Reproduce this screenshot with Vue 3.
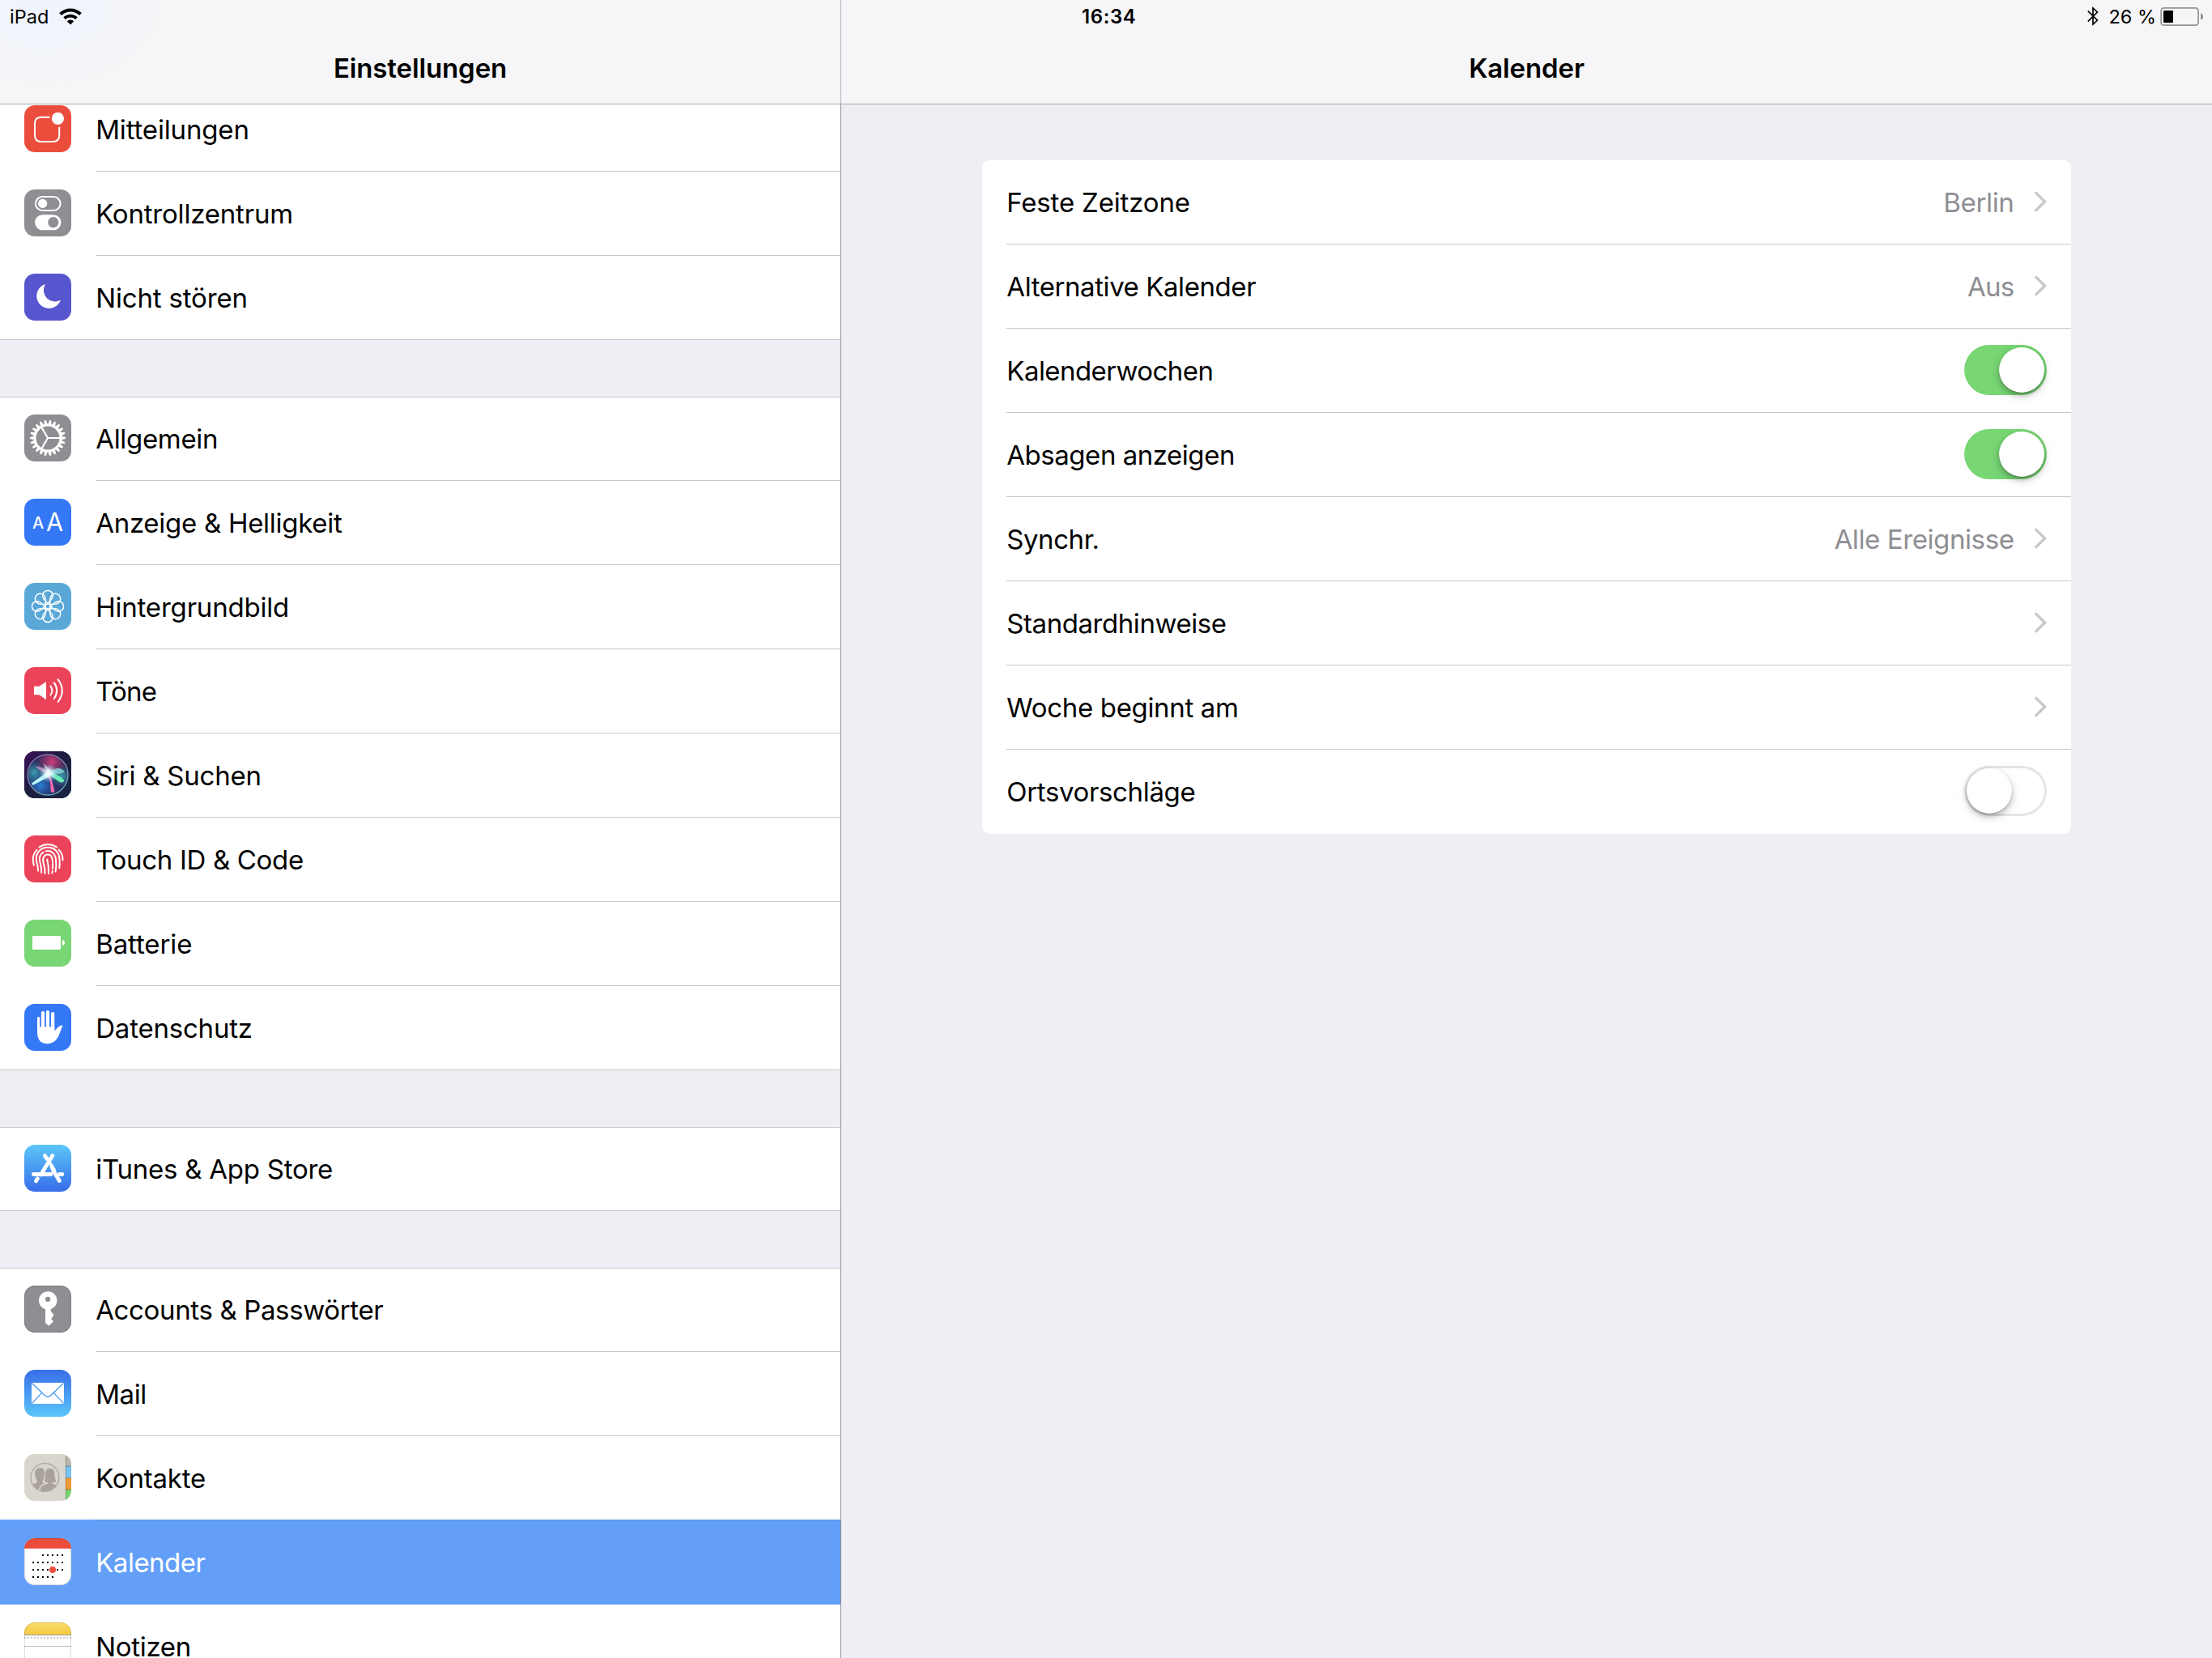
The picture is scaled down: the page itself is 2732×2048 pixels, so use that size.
<script setup>
const groups = [
  [
    { id: 'notify', label: 'Mitteilungen', bg: '#eb4d3d', track: -0.16 },
    { id: 'control', label: 'Kontrollzentrum', bg: '#8e8e93', track: -0.2 },
    { id: 'moon', label: 'Nicht stören', bg: '#5756ce', track: -0.16 },
  ],
  [
    { id: 'gear', label: 'Allgemein', bg: '#8e8e93', track: -0.32 },
    { id: 'display', label: 'Anzeige & Helligkeit', bg: '#3478f6', track: -0.28 },
    { id: 'wallpaper', label: 'Hintergrundbild', bg: '#59a8d8', track: -0.2 },
    { id: 'sound', label: 'Töne', bg: '#eb445a', track: -0.8 },
    { id: 'siri', label: 'Siri & Suchen', bg: '#1b1c3c', track: -0.25 },
    { id: 'touch', label: 'Touch ID & Code', bg: '#eb445a', track: -0.32 },
    { id: 'battery', label: 'Batterie', bg: '#78d674', track: -0.1 },
    { id: 'privacy', label: 'Datenschutz', bg: '#3478f6', track: -0.2 },
  ],
  [{ id: 'store', label: 'iTunes & App Store', bg: 'linear-gradient(#5bc6f9, #386de9)', track: -0.25 }],
  [
    { id: 'key', label: 'Accounts & Passwörter', bg: '#8e8e93', track: -0.36 },
    { id: 'mail', label: 'Mail', bg: 'linear-gradient(#386de9, #5bc6f9)', track: -0.4 },
    { id: 'contacts', label: 'Kontakte', bg: '#d9d6ce', track: -0.2 },
    { id: 'calendar', label: 'Kalender', bg: '#ffffff', selected: true, track: -0.5 },
    { id: 'notes', label: 'Notizen', bg: '#ffffff', track: -0.3 },
  ],
]

const settings = [
  { label: 'Feste Zeitzone', track: -0.17, value: 'Berlin', valueTrack: -0.35 },
  { label: 'Alternative Kalender', track: -0.43, value: 'Aus', valueTrack: -0.7 },
  { label: 'Kalenderwochen', track: -0.56, toggle: true, on: true },
  { label: 'Absagen anzeigen', track: -0.47, toggle: true, on: true },
  { label: 'Synchr.', track: -0.45, value: 'Alle Ereignisse', valueTrack: -0.4 },
  { label: 'Standardhinweise', track: -0.44 },
  { label: 'Woche beginnt am', track: -0.34 },
  { label: 'Ortsvorschläge', track: -0.35, toggle: true, on: false },
]

const gearTeeth = Array.from({ length: 22 }, (_, i) => (i * 360) / 22)
const petals = Array.from({ length: 8 }, (_, i) => i * 45)

const calendarDots = [
  ...[23, 29, 35, 41, 47].map((x) => [x, 21]),
  ...[11, 17, 23, 29, 35, 41, 47].map((x) => [x, 30]),
  ...[11, 17, 23, 29, 41, 47].map((x) => [x, 39]),
  ...[11, 17, 23, 29, 35].map((x) => [x, 48]),
]
const notesHoles = Array.from({ length: 15 }, (_, i) => i * 4)
</script>

<template>
  <div class="screen">
    <aside class="sidebar">
      <header class="head head-left">
        <div class="status">
          <span class="carrier">iPad</span>
          <svg class="wifi" width="28" height="21" viewBox="0 0 28 21">
            <path d="M1.6 7.6 A17.6 17.6 0 0 1 26.4 7.6" fill="none" stroke="#000" stroke-width="4.2" />
            <path d="M6.6 12.6 A10.6 10.6 0 0 1 21.4 12.6" fill="none" stroke="#000" stroke-width="3.8" />
            <path d="M14 20.4 L9.8 16.2 A6 6 0 0 1 18.2 16.2 Z" />
          </svg>
        </div>
        <h1 class="title">Einstellungen</h1>
      </header>

      <nav class="list">
        <section v-for="(group, g) in groups" :key="g" class="group">
          <div v-for="item in group" :key="item.id" class="row" :class="{ selected: item.selected }">
            <svg class="icon" :style="{ background: item.bg }" viewBox="0 0 58 58">
              <g v-if="item.id === 'notify'">
                <path d="M31.5 14.8 H21 Q13 14.8 13 22.8 V37 Q13 45 21 45 H35.2 Q43.2 45 43.2 37 V26.7" fill="none" stroke="#fff" stroke-width="2" />
                <circle cx="41.4" cy="16.4" r="7.6" fill="#fff" />
              </g>

              <g v-else-if="item.id === 'control'">
                <rect x="14" y="9" width="30.5" height="17" rx="8.5" fill="none" stroke="#fff" stroke-width="2" />
                <circle cx="22.6" cy="17.4" r="5.6" fill="#fff" />
                <rect x="13" y="31.2" width="32.5" height="19" rx="9.5" fill="#fff" />
                <circle cx="35.8" cy="40.7" r="6.6" fill="#8e8e93" />
              </g>

              <path v-else-if="item.id === 'moon'" d="M26 13 A15.3 15.3 0 1 0 45 32.5 A14 14 0 0 1 26 13 Z" fill="#fff" />

              <g v-else-if="item.id === 'gear'" transform="translate(29 29)" stroke="#fff" fill="none">
                <circle r="15.9" stroke-width="2.8" />
                <path
                  v-for="a in gearTeeth" :key="a" :transform="`rotate(${a})`"
                  d="M16.5 -2.2 L22 -1 V1 L16.5 2.2 Z" fill="#fff" stroke="none"
                />
                <path d="M0 0 H15 M0 0 L-7.5 -13 M0 0 L-7.5 13" stroke-width="2.2" />
              </g>

              <g v-else-if="item.id === 'display'" fill="#fff" font-family="Inter, sans-serif" text-anchor="middle">
                <text x="17.2" y="37.2" font-size="20" font-weight="500">A</text>
                <text x="37.6" y="40" font-size="30.5">A</text>
              </g>

              <g v-else-if="item.id === 'wallpaper'" transform="translate(29 29)" stroke="#fff" stroke-width="1.5" fill="none">
                <path
                  v-for="a in petals" :key="a" :transform="`rotate(${a})`"
                  d="M0 -3.6 L-5 -9.4 A6.3 6.3 0 1 1 5 -9.4 Z"
                />
                <circle r="3" />
              </g>

              <g v-else-if="item.id === 'sound'" fill="none" stroke="#fff" stroke-width="2">
                <path d="M12 23.8 H18.6 L27 18 V40.2 L18.6 34.2 H12 Z" fill="#fff" stroke="none" />
                <path d="M32 22.8 Q36.8 29 32 35.2 M36.4 18.6 Q44 29 36.4 39.6 M41.2 14.6 Q52.4 29 41.2 43.6" />
              </g>

              <g v-else-if="item.id === 'siri'">
                <defs>
                  <linearGradient id="siriBg" x1="0" y1="0" x2="1" y2="1">
                    <stop offset="0" stop-color="#3d0f5c" />
                    <stop offset="0.45" stop-color="#1c1d3c" />
                    <stop offset="1" stop-color="#182747" />
                  </linearGradient>
                  <linearGradient id="siriRing" x1="0" y1="0" x2="0.6" y2="1">
                    <stop offset="0" stop-color="#8a6aa4" />
                    <stop offset="1" stop-color="#6fa8bd" />
                  </linearGradient>
                  <radialGradient id="siriRed"><stop offset="0" stop-color="#d0407c" /><stop offset="1" stop-color="#b0285c" stop-opacity="0" /></radialGradient>
                  <radialGradient id="siriBlue"><stop offset="0" stop-color="#2b7fd6" /><stop offset="1" stop-color="#2458b0" stop-opacity="0" /></radialGradient>
                  <radialGradient id="siriTeal"><stop offset="0" stop-color="#3f9cb4" /><stop offset="1" stop-color="#2c8c90" stop-opacity="0" /></radialGradient>
                  <radialGradient id="siriCore"><stop offset="0" stop-color="#fff" /><stop offset="0.35" stop-color="#e2f8ff" stop-opacity="0.85" /><stop offset="1" stop-color="#9adcf0" stop-opacity="0" /></radialGradient>
                  <filter id="siriSoft" x="-30%" y="-30%" width="160%" height="160%"><feGaussianBlur stdDeviation="0.5" /></filter>
                  <clipPath id="siriClip"><circle cx="29" cy="29" r="24.5" /></clipPath>
                </defs>
                <rect width="58" height="58" fill="url(#siriBg)" />
                <g clip-path="url(#siriClip)">
                  <circle cx="29" cy="29" r="24.5" fill="#2a2f62" />
                  <circle cx="34" cy="13" r="19" fill="url(#siriRed)" />
                  <circle cx="20" cy="42" r="20" fill="url(#siriBlue)" />
                  <circle cx="12" cy="26" r="14" fill="url(#siriTeal)" />
                  <circle cx="46" cy="31" r="13" fill="url(#siriTeal)" />
                  <g filter="url(#siriSoft)">
                    <path d="M30 27 C26 22 20 18 14 19 C18 23 24 27 30 27 Z" fill="#e0a0d0" opacity="0.7" />
                    <path d="M30 28 C38 18 46 20 50 25.5 C44 28.5 36 29 30 28 Z" fill="#8ad8dc" opacity="0.8" />
                    <path d="M30 25 C40 28 47 32 49.5 36.5 Q47 40 43 37.4 C38 34 33 32 30 25 Z" fill="#6ce8b4" />
                    <path d="M28 25 C34 33 36 42 37.4 50 Q34.4 52.5 32.6 49 C33 40 31 33 28 25 Z" fill="#f468b2" />
                    <path d="M32 23 L31.4 31 L10.4 42 L9.2 39.6 Z" fill="#bdf8f8" />
                    <path d="M29 28 L23 14 L33.4 25 Z" fill="#f6c0e0" opacity="0.7" />
                  </g>
                  <circle cx="30" cy="27" r="11.5" fill="url(#siriCore)" />
                </g>
                <circle cx="29" cy="29" r="25" fill="none" stroke="url(#siriRing)" stroke-width="1.3" />
              </g>

              <path
                v-else-if="item.id === 'touch'"
                d="M18.5 14.4 Q29 7.8 40 14.4 M15.6 17.6 Q8.5 24.5 11.8 36.8 M42.6 17.6 Q48 23 47.4 30.4 M17 43.6 Q17.2 38.6 15.4 33.4 C12.6 22.5 19.5 14.8 29 14.8 C37.5 14.8 43 20.5 43.4 29 Q44.2 35 43.3 40.4 M21.2 46 Q21.4 39 19.4 33 C17.8 26.5 19.5 23 23.4 20.8 M26.4 19.4 C33 17.8 38 22 39 29 Q40 37 38.6 44.6 M25.6 47 Q25.6 39.5 23.5 33 C22.2 27 25 23.6 29 23.6 C32.6 23.6 34.6 26.6 35 31.4 Q35.6 36.4 35 41 M34.8 44 L34.4 46.4 M30 47.2 Q30.4 38 28.2 29.6"
                fill="none" stroke="#fff" stroke-width="2" stroke-linecap="round"
              />

              <g v-else-if="item.id === 'battery'" fill="#fff">
                <rect x="10" y="20" width="35" height="17" rx="1.2" />
                <path d="M47 25 Q50 25.6 50 28.5 Q50 31.4 47 32 Z" />
              </g>

              <g v-else-if="item.id === 'privacy'" fill="#fff">
                <path d="M16 28.4 H37.2 V32.6 L38.4 32.6 C41 29.5 43 26.2 47.6 26.8 C45.4 31 44.4 35 42.8 38.6 C40 45.6 35 49.2 28.6 49.2 C20 49.2 16.4 44 16 36 Z" />
                <path d="M17.6 17.5 V31" stroke="#fff" stroke-width="3.2" stroke-linecap="round" />
                <path d="M23 11 V31 M29 10 V31 M35.2 12 V31" stroke="#fff" stroke-width="4.2" stroke-linecap="round" />
              </g>

              <g v-else-if="item.id === 'store'" fill="none" stroke="#fff" stroke-width="4.8" stroke-linecap="round">
                <path d="M34.8 13.4 L20.4 37" />
                <path d="M25.4 13.4 L28 17.6" />
                <path d="M11.4 36.5 H33 M43.4 36.5 H46.8" />
                <path d="M16.4 41.8 L14.4 44.8" />
                <path d="M36 32.2 L43.4 44.6" />
                <path d="M31.8 19.8 Q35.5 24 39.4 31.4 L34.4 34.6 Q31 27.6 31 23 Z" fill="#fff" stroke="none" />
              </g>

              <g v-else-if="item.id === 'key'">
                <path d="M26 27 V46 L30 49.8 L36 44.4 L33.2 41 L36 37.6 V35.6 L32.8 32 V27 Z" fill="#fff" />
                <circle cx="29.2" cy="18.4" r="11.2" fill="#fff" />
                <circle cx="29.1" cy="16.8" r="3.1" fill="#8e8e93" />
                <rect x="0.5" y="0.5" width="57" height="57" rx="12.5" fill="none" stroke="#7d7d82" stroke-width="1" />
              </g>

              <g v-else-if="item.id === 'mail'">
                <rect x="9" y="16" width="40" height="26" fill="#fff" />
                <path d="M9.4 16.4 L25.2 31.4 Q29 35.2 32.8 31.4 L48.6 16.4 M9.4 41.6 L21.4 28.6 M48.6 41.6 L36.6 28.6" fill="none" stroke="#4a9bf1" stroke-width="1.4" />
              </g>

              <g v-else-if="item.id === 'contacts'">
                <defs><clipPath id="contactClip"><circle cx="25.4" cy="29" r="17" /></clipPath></defs>
                <rect x="51" width="7" height="15" fill="#b9b6ad" />
                <rect x="51" y="15" width="7" height="14.5" fill="#76c3f4" />
                <rect x="51" y="29.5" width="7" height="14.5" fill="#f19a38" />
                <rect x="51" y="44" width="7" height="14" fill="#76d572" />
                <path d="M51 15.2 H58 M51 29.6 H58 M51 44.2 H58" stroke="#000" stroke-opacity="0.25" stroke-width="1" />
                <path d="M51.4 0 V58" stroke="#000" stroke-opacity="0.2" stroke-width="1" />
                <g clip-path="url(#contactClip)" fill="#a9a29b">
                  <path d="M31.6 17.8 C37 17.8 37.4 23 37.4 27 Q38 31.6 39.6 33.8 Q37 35.6 34.4 35.2 V36.4 Q40 38.4 42.4 39.4 L42 47 H20 V41 Q22 38.6 29.4 36.4 V35.2 Q26.4 35.4 24.6 33.8 Q26 31.4 26 27 C26 22 26.6 17.8 31.6 17.8 Z" />
                  <path d="M19.6 17 C24.4 17 25.6 21 25 25.4 Q25 30 22.8 32.2 V35.6 L26.4 37 Q18.8 39 18 47 H6 L7.6 38.4 L15.6 35.4 V32.2 Q13.4 29.6 13.4 25.4 C13 20.6 14.4 17 19.6 17 Z" />
                  <path d="M27.8 36 Q18.6 38 18 46" fill="none" stroke="#d9d6ce" stroke-width="1.3" />
                </g>
                <circle cx="25.4" cy="29" r="17.4" fill="none" stroke="#a9a29b" stroke-width="1.2" />
              </g>

              <g v-else-if="item.id === 'calendar'">
                <rect width="58" height="12.8" fill="#eb4d3d" />
                <rect v-for="(d, i) in calendarDots" :key="i" :x="d[0] - 1" :y="d[1] - 1" width="2" height="2" fill="#000" />
                <circle cx="35" cy="39" r="4" fill="#eb4d3d" />
                <rect x="0.5" y="0.5" width="57" height="57" rx="12.5" fill="none" stroke="#000" stroke-opacity="0.13" stroke-width="1" />
              </g>

              <g v-else-if="item.id === 'notes'">
                <defs>
                  <linearGradient id="notesTop" x1="0" y1="0" x2="0" y2="1">
                    <stop offset="0" stop-color="#fadc6e" />
                    <stop offset="1" stop-color="#f5ca40" />
                  </linearGradient>
                </defs>
                <rect width="58" height="15" fill="url(#notesTop)" />
                <rect y="15" width="58" height="1.2" fill="#a8a6a0" />
                <rect v-for="x in notesHoles" :key="x" :x="x" y="18" width="2" height="2" fill="#c8c8c8" />
                <rect y="29" width="58" height="1" fill="#b8b8b8" />
                <rect x="0.5" y="0.5" width="57" height="57" rx="12.5" fill="none" stroke="#000" stroke-opacity="0.13" stroke-width="1" />
              </g>
            </svg>
            <span class="label" :style="{ letterSpacing: item.track + 'px' }">{{ item.label }}</span>
          </div>
        </section>
      </nav>
    </aside>

    <main class="detail">
      <header class="head head-right">
        <div class="status">
          <span class="time">16:34</span>
          <div class="indicators">
            <svg class="bt" width="14" height="24" viewBox="0 0 14 24">
              <path d="M0.8 5.6 L12.4 17 L7 22 V2 L12.4 7 L0.8 18.4" fill="none" stroke="#000" stroke-width="1.7" />
            </svg>
            <span class="percent">26 %</span>
            <svg class="cell" width="54" height="23" viewBox="0 0 54 23">
              <rect x="1.15" y="0.85" width="45.9" height="21.3" rx="3.4" fill="none" stroke="#949496" stroke-width="1.7" />
              <rect x="4" y="4" width="12" height="15" rx="0.8" />
              <path d="M50 7.5 Q53 8.2 53 11.5 Q53 14.8 50 15.5 Z" fill="#949496" />
            </svg>
          </div>
        </div>
        <h1 class="title">Kalender</h1>
      </header>

      <section class="card">
        <div v-for="s in settings" :key="s.label" class="setting">
          <span class="label" :style="{ letterSpacing: s.track + 'px' }">{{ s.label }}</span>
          <span v-if="s.toggle" class="switch" :class="{ on: s.on }"><span class="knob"></span></span>
          <template v-else>
            <span v-if="s.value" class="value" :style="{ letterSpacing: s.valueTrack + 'px' }">{{ s.value }}</span>
            <svg class="chevron" width="16" height="26" viewBox="0 0 16 26">
              <path d="M1.7 1.4 L13.6 13 L1.7 24.6" fill="none" stroke="#c7c7cc" stroke-width="3.4" />
            </svg>
          </template>
        </div>
      </section>
    </main>
  </div>
</template>

<style>
body {
  margin: 0;
  background: #efeef4;
}
</style>

<style scoped>
.screen {
  display: flex;
  width: 2732px;
  height: 2048px;
  overflow: hidden;
  background: #efeef4;
  color: #000;
  font-family: Inter, "Liberation Sans", sans-serif;
  font-size: 33px;
}

.sidebar {
  display: flex;
  flex-direction: column;
  box-sizing: border-box;
  width: 1039px;
  height: 2048px;
  flex: none;
  border-right: 1px solid #8e8e93;
}

.detail {
  flex: 1;
  min-width: 0;
}

.head {
  box-sizing: border-box;
  height: 129px;
  flex: none;
  border-bottom: 1px solid #a8a8ac;
  background: #f6f6f8;
}

.head-left {
  margin-right: -1px;
  border-right: 1px solid #b4b4b8;
  background: radial-gradient(ellipse 150px 110px at 55px 0, #eef3fd 0%, rgba(246, 246, 248, 0) 100%), #f6f6f8;
}

.status {
  display: flex;
  align-items: center;
  box-sizing: border-box;
  height: 40px;
  font-size: 23.5px;
  line-height: 41px;
}

.carrier {
  margin-left: 12px;
  width: 61px;
}

.title {
  margin: 0;
  font-size: 33px;
  font-weight: 600;
  letter-spacing: -0.12px;
  line-height: 88px;
  text-align: center;
}

.head-right .status {
  justify-content: space-between;
  padding: 0 10px 0 297px;
}

.time {
  font-size: 24px;
  font-weight: 600;
  letter-spacing: 0.6px;
}

.indicators {
  display: flex;
  align-items: center;
}

.percent {
  margin: 0 5px 0 12px;
}

.cell {
  margin-top: 1px;
}

.list {
  flex: 1;
  min-height: 0;
  overflow: hidden;
}

.group {
  position: relative;
  margin-bottom: 70px;
  background: #fff;
  box-shadow: inset 0 1px #c8c7cc;
}

.group:first-child {
  margin-top: -21px;
}

.row {
  display: flex;
  box-sizing: border-box;
  height: 104px;
  padding: 22px 0 0 30px;
  background:
    linear-gradient(#c8c7cc, #c8c7cc) 118px 103px / 100% 1px no-repeat;
}

.row:last-child {
  background-position: 0 103px;
}

.row.selected {
  margin-top: -1px;
  height: 105px;
  padding-top: 23px;
  background:
    linear-gradient(#5a93e6, #5a93e6) 118px 0 / 100% 1px no-repeat,
    #639ff8;
  color: #fff;
}

.icon {
  display: block;
  width: 58px;
  height: 58px;
  flex: none;
  border-radius: 13px;
  overflow: hidden;
}

.row .label {
  margin: -22px 0 0 30.2px;
  line-height: 104px;
  white-space: nowrap;
}

.card {
  margin: 69px 0 0 174px;
  width: 1345px;
  border-radius: 9px;
  background: #fff;
}

.setting {
  display: flex;
  align-items: center;
  box-sizing: border-box;
  height: 104px;
  padding: 0 30px 0 30.3px;
  line-height: 104px;
  background: linear-gradient(#c8c7cc, #c8c7cc) 30px 103px / 100% 1px no-repeat;
}

.setting:last-child {
  background: none;
}

.setting .label {
  margin-right: auto;
}

.value {
  margin-right: 24.5px;
  color: #8e8e93;
}

.chevron {
  margin-top: -2px;
}

.switch {
  display: flex;
  box-sizing: border-box;
  width: 102px;
  height: 62px;
  margin-top: -2px;
  padding: 3px;
  border-radius: 31px;
  background: #fff;
  box-shadow: inset 0 0 0 3px #e5e5e5;
}

.switch.on {
  justify-content: flex-end;
  background: #78d674;
  box-shadow: none;
}

.knob {
  width: 56px;
  height: 56px;
  border-radius: 50%;
  background: #fff;
  box-shadow: 0 1px 1px rgba(0, 0, 0, 0.24), 0 4px 7px rgba(0, 0, 0, 0.24), 0 4px 18px rgba(0, 0, 0, 0.08);
}
</style>
